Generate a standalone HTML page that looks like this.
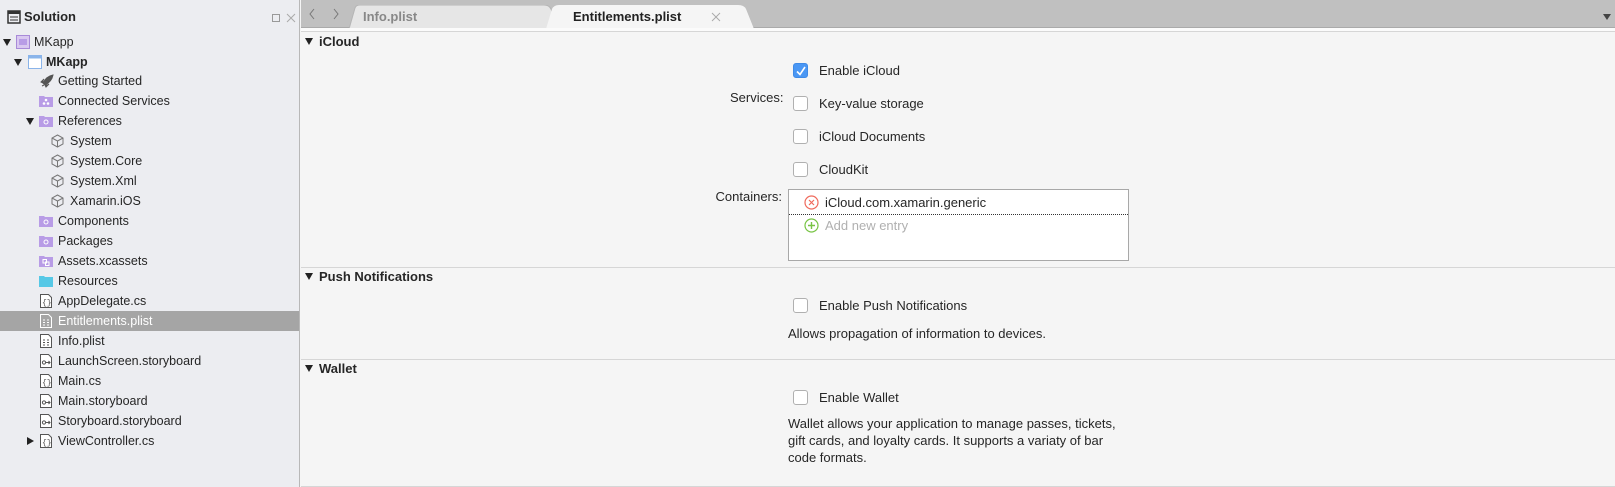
<!DOCTYPE html>
<html><head><meta charset="utf-8"><style>
*{box-sizing:border-box;margin:0;padding:0}
body{width:1615px;height:487px;overflow:hidden;font-family:"Liberation Sans",sans-serif;font-size:12.5px;color:#262626;background:#f5f5f5;position:relative}
#side{position:absolute;left:0;top:0;width:300px;height:487px;background:#ecedf1;border-right:1px solid #b8b8b8}
.r{position:absolute;left:0;width:299px;height:20px;line-height:20px;white-space:nowrap}
.r span.t{position:absolute}
.sel{background:#a5a5a5;color:#fff}
.ic{position:absolute;top:4px}
.tri{position:absolute;top:7px;width:0;height:0;border-left:4.5px solid transparent;border-right:4.5px solid transparent;border-top:7px solid #222}
.trr{position:absolute;top:6px;width:0;height:0;border-top:4.5px solid transparent;border-bottom:4.5px solid transparent;border-left:7px solid #222}
#tabs{position:absolute;left:301px;top:0;right:0;height:28px;background:#c0c0c0;border-bottom:1px solid #aaa}
.a{position:absolute}
.hd{position:absolute;left:305px;font-weight:bold;font-size:13px}
.hd:before{content:"";display:inline-block;border-left:4.5px solid transparent;border-right:4.5px solid transparent;border-top:7px solid #222;margin-right:6px;vertical-align:1px}
.line{position:absolute;left:301px;right:0;height:1px;background:#d6d6d6}
.cb{position:absolute;left:793px;width:15px;height:15px;border:1px solid #b0b0b0;border-radius:3px;background:#fff}
.lb{position:absolute;left:819px;font-size:13px}
</style></head><body>
<div id="side">
 <div class="r" style="top:7px;font-weight:bold;font-size:13px"><svg class="ic" style="left:7px;top:3px" width="14" height="14"><rect x="1" y="1" width="12" height="12" fill="none" stroke="#333" stroke-width="1.5"/><rect x="1" y="1" width="12" height="3" fill="#333"/><line x1="3" y1="7" x2="11" y2="7" stroke="#333"/><line x1="3" y1="10" x2="11" y2="10" stroke="#333"/></svg><span class="t" style="left:24px">Solution</span>
 <svg class="a" style="left:272px;top:6px" width="24" height="10"><rect x="0.5" y="1.5" width="7" height="7" fill="none" stroke="#999"/><path d="M15 1l8 8M23 1l-8 8" stroke="#aaa"/></svg></div>
 <div class="r" style="top:32px"><i class="tri" style="left:3px"></i><svg class="ic" style="left:16px;top:3px" width="14" height="14"><rect x="0.5" y="0.5" width="13" height="13" fill="#d9c8f0" stroke="#a88ad8"/><rect x="3" y="4" width="8" height="6" fill="#b89ce6"/></svg><span class="t" style="left:34px">MKapp</span></div>
 <div class="r" style="top:52px;font-weight:bold"><i class="tri" style="left:14px"></i><svg class="ic" style="left:28px;top:3px" width="14" height="14"><rect x="0.5" y="0.5" width="13" height="13" fill="#fff" stroke="#8ab4ea"/><rect x="0.5" y="0.5" width="13" height="3" fill="#8ab4ea"/></svg><span class="t" style="left:46px">MKapp</span></div>
 <div class="r" style="top:71px"><svg class="ic" style="left:40px;top:3px" width="14" height="14"><path d="M13 1C8 2 5 5 3 9l2 2c4-2 7-5 8-10zM3 9L1 8l3-3M5 11l1 2 3-3M2 12l2-1" fill="#555" stroke="#555"/></svg><span class="t" style="left:58px">Getting Started</span></div>
 <div class="r" style="top:91px"><svg class="ic" style="left:39px" width="14" height="12"><path d="M0 1h5l1 1h8v10H0z" fill="#b89ce6"/><circle cx="7" cy="5" r="1.3" fill="#fff"/><circle cx="5" cy="8.5" r="1.3" fill="#fff"/><circle cx="9" cy="8.5" r="1.3" fill="#fff"/></svg><span class="t" style="left:58px">Connected Services</span></div>
 <div class="r" style="top:111px"><i class="tri" style="left:26px"></i><svg class="ic" style="left:39px" width="14" height="12"><path d="M0 1h5l1 1h8v10H0z" fill="#b89ce6"/><circle cx="7" cy="7" r="2" fill="none" stroke="#fff"/></svg><span class="t" style="left:58px">References</span></div>
 <div class="r" style="top:131px"><svg class="ic" style="left:51px;top:3px" width="13" height="14"><path d="M6.5 1l5.5 3v6l-5.5 3L1 10V4z M1 4l5.5 3 5.5-3M6.5 7v6" fill="none" stroke="#777"/></svg><span class="t" style="left:70px">System</span></div>
 <div class="r" style="top:151px"><svg class="ic" style="left:51px;top:3px" width="13" height="14"><path d="M6.5 1l5.5 3v6l-5.5 3L1 10V4z M1 4l5.5 3 5.5-3M6.5 7v6" fill="none" stroke="#777"/></svg><span class="t" style="left:70px">System.Core</span></div>
 <div class="r" style="top:171px"><svg class="ic" style="left:51px;top:3px" width="13" height="14"><path d="M6.5 1l5.5 3v6l-5.5 3L1 10V4z M1 4l5.5 3 5.5-3M6.5 7v6" fill="none" stroke="#777"/></svg><span class="t" style="left:70px">System.Xml</span></div>
 <div class="r" style="top:191px"><svg class="ic" style="left:51px;top:3px" width="13" height="14"><path d="M6.5 1l5.5 3v6l-5.5 3L1 10V4z M1 4l5.5 3 5.5-3M6.5 7v6" fill="none" stroke="#777"/></svg><span class="t" style="left:70px">Xamarin.iOS</span></div>
 <div class="r" style="top:211px"><svg class="ic" style="left:39px" width="14" height="12"><path d="M0 1h5l1 1h8v10H0z" fill="#b89ce6"/><circle cx="7" cy="7" r="2" fill="none" stroke="#fff"/></svg><span class="t" style="left:58px">Components</span></div>
 <div class="r" style="top:231px"><svg class="ic" style="left:39px" width="14" height="12"><path d="M0 1h5l1 1h8v10H0z" fill="#b89ce6"/><circle cx="7" cy="7" r="2" fill="none" stroke="#fff"/></svg><span class="t" style="left:58px">Packages</span></div>
 <div class="r" style="top:251px"><svg class="ic" style="left:39px" width="14" height="12"><path d="M0 1h5l1 1h8v10H0z" fill="#b89ce6"/><rect x="4" y="4.5" width="3.5" height="3.5" fill="none" stroke="#fff"/><rect x="6.5" y="7" width="3.5" height="3.5" fill="none" stroke="#fff"/></svg><span class="t" style="left:58px">Assets.xcassets</span></div>
 <div class="r" style="top:271px"><svg class="ic" style="left:39px" width="14" height="12"><path d="M0 1h5l1 1h8v10H0z" fill="#56c8e6"/></svg><span class="t" style="left:58px">Resources</span></div>
 <div class="r" style="top:291px"><svg class="ic" style="left:40px;top:3px" width="12" height="14"><path d="M0.5 0.5h8l3 3v10h-11z" fill="#fff" stroke="#555"/><text x="2" y="11" font-size="8" fill="#555" font-family="Liberation Mono">{}</text></svg><span class="t" style="left:58px">AppDelegate.cs</span></div>
 <div class="r sel" style="top:311px"><svg class="ic" style="left:40px;top:3px" width="12" height="14"><path d="M0.5 0.5h8l3 3v10h-11z" fill="none" stroke="#fff"/><path d="M3 6h2M3 8.5h2M3 11h2M7 6h2M7 8.5h2M7 11h2" stroke="#fff"/></svg><span class="t" style="left:58px">Entitlements.plist</span></div>
 <div class="r" style="top:331px"><svg class="ic" style="left:40px;top:3px" width="12" height="14"><path d="M0.5 0.5h8l3 3v10h-11z" fill="#fff" stroke="#555"/><path d="M3 6h2M3 8.5h2M3 11h2M7 6h2M7 8.5h2M7 11h2" stroke="#555"/></svg><span class="t" style="left:58px">Info.plist</span></div>
 <div class="r" style="top:351px"><svg class="ic" style="left:40px;top:3px" width="12" height="14"><path d="M0.5 0.5h8l3 3v10h-11z" fill="#fff" stroke="#555"/><circle cx="4" cy="8.5" r="1.6" fill="none" stroke="#555"/><path d="M6 8.5h4M8.5 7l1.5 1.5-1.5 1.5" fill="none" stroke="#555"/></svg><span class="t" style="left:58px">LaunchScreen.storyboard</span></div>
 <div class="r" style="top:371px"><svg class="ic" style="left:40px;top:3px" width="12" height="14"><path d="M0.5 0.5h8l3 3v10h-11z" fill="#fff" stroke="#555"/><text x="2" y="11" font-size="8" fill="#555" font-family="Liberation Mono">{}</text></svg><span class="t" style="left:58px">Main.cs</span></div>
 <div class="r" style="top:391px"><svg class="ic" style="left:40px;top:3px" width="12" height="14"><path d="M0.5 0.5h8l3 3v10h-11z" fill="#fff" stroke="#555"/><circle cx="4" cy="8.5" r="1.6" fill="none" stroke="#555"/><path d="M6 8.5h4M8.5 7l1.5 1.5-1.5 1.5" fill="none" stroke="#555"/></svg><span class="t" style="left:58px">Main.storyboard</span></div>
 <div class="r" style="top:411px"><svg class="ic" style="left:40px;top:3px" width="12" height="14"><path d="M0.5 0.5h8l3 3v10h-11z" fill="#fff" stroke="#555"/><circle cx="4" cy="8.5" r="1.6" fill="none" stroke="#555"/><path d="M6 8.5h4M8.5 7l1.5 1.5-1.5 1.5" fill="none" stroke="#555"/></svg><span class="t" style="left:58px">Storyboard.storyboard</span></div>
 <div class="r" style="top:431px"><i class="trr" style="left:27px"></i><svg class="ic" style="left:40px;top:3px" width="12" height="14"><path d="M0.5 0.5h8l3 3v10h-11z" fill="#fff" stroke="#555"/><text x="2" y="11" font-size="8" fill="#555" font-family="Liberation Mono">{}</text></svg><span class="t" style="left:58px">ViewController.cs</span></div>
</div>

<div id="tabs">
 <svg class="a" style="left:8px;top:8px" width="30" height="12"><path d="M5 1L1 6l4 5M25 1l4 5-4 5" fill="none" stroke="#777"/></svg>
 <svg class="a" style="left:48px;top:5px" width="210" height="24"><path d="M0 24L6 3Q7 0 11 0H195Q200 0 202 4L209 24Z" fill="#e6e6e6" stroke="#b5b5b5"/></svg>
 <span class="a" style="left:62px;top:9px;font-weight:bold;color:#888;font-size:13px">Info.plist</span>
 <svg class="a" style="left:245px;top:5px" width="210" height="24"><path d="M0 24L6 4Q8 0 13 0H192Q198 0 200 4L208 24Z" fill="#f5f5f5"/></svg>
 <span class="a" style="left:272px;top:9px;font-weight:bold;color:#222;font-size:13px">Entitlements.plist</span>
 <svg class="a" style="left:410px;top:12px" width="10" height="10"><path d="M1 1l8 8M9 1l-8 8" stroke="#aaa"/></svg>
 <svg class="a" style="left:1302px;top:14px" width="8" height="6"><path d="M0 0h8L4 6z" fill="#444"/></svg>
</div>
<div class="a" style="left:301px;top:28px;right:0;height:4px;background:#fbfbfb;border-bottom:1px solid #d6d6d6"></div>

<div class="hd" style="top:34px">iCloud</div>
<div class="cb" style="top:63px;background:#4a97f4;border-color:#3f8ae6"><svg style="position:absolute;left:2px;top:2px" width="10" height="10"><path d="M1 5.5l3 3L9 1" fill="none" stroke="#fff" stroke-width="1.6"/></svg></div>
<div class="lb" style="top:63px">Enable iCloud</div>
<div class="a" style="left:730px;width:52px;text-align:right;top:90px;font-size:13px">Services:</div>
<div class="cb" style="top:96px"></div><div class="lb" style="top:96px">Key-value storage</div>
<div class="cb" style="top:129px"></div><div class="lb" style="top:129px">iCloud Documents</div>
<div class="cb" style="top:162px"></div><div class="lb" style="top:162px">CloudKit</div>
<div class="a" style="left:700px;width:82px;text-align:right;top:189px;font-size:13px">Containers:</div>
<div class="a" style="left:788px;top:189px;width:341px;height:72px;background:#fff;border:1px solid #a8a8a8">
 <svg class="a" style="left:15px;top:5px" width="15" height="15"><circle cx="7.5" cy="7.5" r="6.5" fill="none" stroke="#ef6a5c" stroke-width="1.2"/><path d="M5 5l5 5M10 5l-5 5" stroke="#ef6a5c" stroke-width="1.2"/></svg>
 <span class="a" style="left:36px;top:5px;font-size:13px">iCloud.com.xamarin.generic</span>
 <div class="a" style="left:0;right:0;top:24px;border-top:1px dotted #333"></div>
 <svg class="a" style="left:15px;top:28px" width="15" height="15"><circle cx="7.5" cy="7.5" r="6.5" fill="none" stroke="#78c445" stroke-width="1.2"/><path d="M7.5 4v7M4 7.5h7" stroke="#78c445" stroke-width="1.4"/></svg>
 <span class="a" style="left:36px;top:28px;font-size:13px;color:#b0b0b0">Add new entry</span>
</div>
<div class="line" style="top:267px"></div>
<div class="hd" style="top:269px">Push Notifications</div>
<div class="cb" style="top:298px"></div><div class="lb" style="top:298px">Enable Push Notifications</div>
<div class="a" style="left:788px;top:326px;font-size:13px">Allows propagation of information to devices.</div>
<div class="line" style="top:359px"></div>
<div class="hd" style="top:361px">Wallet</div>
<div class="cb" style="top:390px"></div><div class="lb" style="top:390px">Enable Wallet</div>
<div class="a" style="left:788px;top:416px;width:335px;font-size:13px;line-height:16.8px">Wallet allows your application to manage passes, tickets, gift cards, and loyalty cards. It supports a variaty of bar code formats.</div>
<div class="line" style="top:486px"></div>
</body></html>
